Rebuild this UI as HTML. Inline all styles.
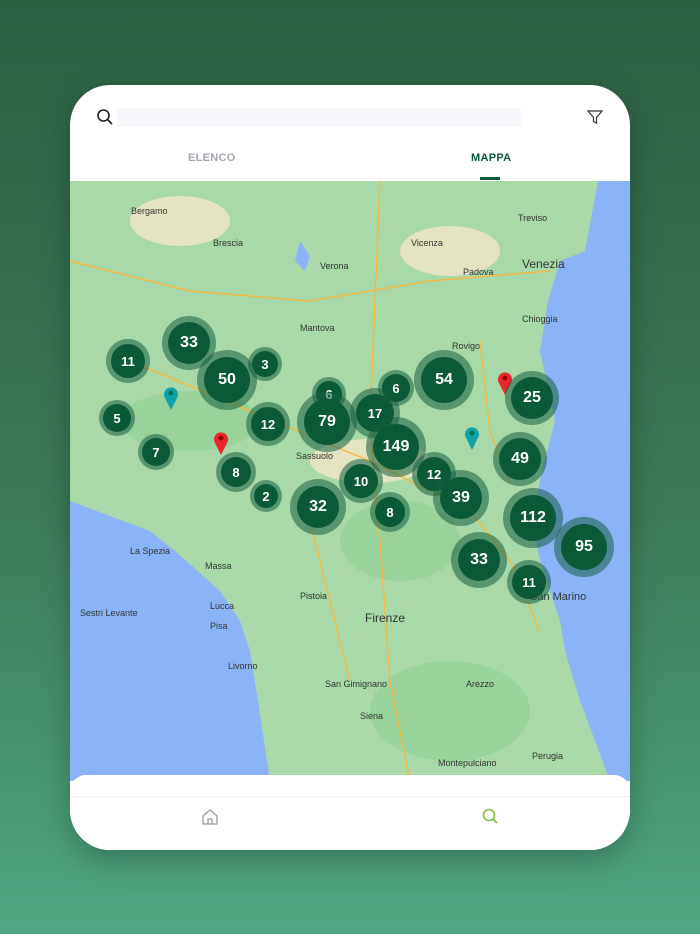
<!DOCTYPE html>
<html><head><meta charset="utf-8"><style>
*{margin:0;padding:0;box-sizing:border-box}
body{width:700px;height:934px;background:linear-gradient(#2d5f43 0%,#3a7a58 55%,#4fa883 100%);font-family:"Liberation Sans",sans-serif;position:relative;overflow:hidden}
.card{position:absolute;left:70px;top:85px;width:560px;height:765px;background:#fff;border-radius:40px;overflow:hidden;box-shadow:0 10px 30px rgba(0,0,0,.25)}
.search{position:absolute;left:47px;top:23px;width:404px;height:19px;background:#f8f8fc}
.tab{position:absolute;top:67px;font-size:11px;font-weight:bold;letter-spacing:.3px}
.map{position:absolute;left:0;top:96px;width:560px;height:600px;background:#a9d9a9}
.c{position:absolute;border-radius:50%;background:rgba(20,95,65,.55);display:flex;align-items:center;justify-content:center}
.c b{border-radius:50%;background:#0a5a38;color:#fff;display:flex;align-items:center;justify-content:center;font-weight:bold}
.lbl{position:absolute;font-size:9px;color:#333}
.nav{position:absolute;left:0;top:690px;width:560px;height:75px;background:#fff;border-radius:16px 16px 0 0}
</style></head><body>
<div class="card">
<svg style="position:absolute;left:26px;top:23px" width="18" height="18" viewBox="0 0 18 18"><circle cx="7.5" cy="7.5" r="5.5" fill="none" stroke="#222" stroke-width="1.6"/><path d="M11.5 11.5L16 16" stroke="#222" stroke-width="1.6"/></svg>
<div class="search"></div>
<svg style="position:absolute;left:517px;top:24px" width="16" height="16" viewBox="0 0 16 16"><path d="M1 2h14L9.5 8.5V14l-3-1.5V8.5Z" fill="none" stroke="#333" stroke-width="1.2"/></svg>
<div class="tab" style="left:118px;color:#a3a3b3">ELENCO</div>
<div class="tab" style="left:401px;color:#0b5a3a">MAPPA</div>
<div style="position:absolute;left:410px;top:92px;width:20px;height:3px;background:#0b5a3a"></div>
<div class="map">
<svg width="560" height="600" style="position:absolute;left:0;top:0">
<path d="M0 320L40 335L80 350L105 370L150 410L170 440L180 470L188 520L200 600L0 600Z" fill="#8ab4f8"/>
<path d="M560 0L560 600L540 600L510 520L495 470L490 440L470 380L462 340L472 290L485 240L470 170L478 120L490 80L515 70L528 0Z" fill="#8ab4f8"/>
<path d="M230 60L240 75L235 90L225 80Z" fill="#8ab4f8"/>
<g fill="#94cf95" opacity=".7"><ellipse cx="380" cy="530" rx="80" ry="50"/><ellipse cx="120" cy="240" rx="70" ry="30"/><ellipse cx="330" cy="360" rx="60" ry="40"/></g>
<g fill="#f3e6c8" opacity=".8"><ellipse cx="110" cy="40" rx="50" ry="25"/><ellipse cx="380" cy="70" rx="50" ry="25"/><ellipse cx="300" cy="280" rx="60" ry="22"/></g>
<g stroke="#f5b942" stroke-width="1.5" fill="none"><path d="M0 80L120 110L240 120L360 100L480 90"/><path d="M60 180L180 230L300 280L400 330L440 380L470 450"/><path d="M310 0L305 120L300 240L310 360L320 500L340 600"/><path d="M410 160L420 250L440 300"/><path d="M240 340L260 420L280 500"/></g>
</svg>
<div class="lbl" style="left:61px;top:25px">Bergamo</div><div class="lbl" style="left:143px;top:57px">Brescia</div><div class="lbl" style="left:250px;top:80px">Verona</div><div class="lbl" style="left:341px;top:57px">Vicenza</div><div class="lbl" style="left:393px;top:86px">Padova</div><div class="lbl" style="left:452px;top:76px;font-size:12px">Venezia</div><div class="lbl" style="left:448px;top:32px">Treviso</div><div class="lbl" style="left:230px;top:142px">Mantova</div><div class="lbl" style="left:382px;top:160px">Rovigo</div><div class="lbl" style="left:226px;top:270px">Sassuolo</div><div class="lbl" style="left:60px;top:365px">La Spezia</div><div class="lbl" style="left:135px;top:380px">Massa</div><div class="lbl" style="left:140px;top:420px">Lucca</div><div class="lbl" style="left:230px;top:410px">Pistoia</div><div class="lbl" style="left:295px;top:430px;font-size:12px">Firenze</div><div class="lbl" style="left:140px;top:440px">Pisa</div><div class="lbl" style="left:158px;top:480px">Livorno</div><div class="lbl" style="left:255px;top:498px">San Gimignano</div><div class="lbl" style="left:396px;top:498px">Arezzo</div><div class="lbl" style="left:290px;top:530px">Siena</div><div class="lbl" style="left:368px;top:577px">Montepulciano</div><div class="lbl" style="left:462px;top:570px">Perugia</div><div class="lbl" style="left:460px;top:410px;font-size:11px">San Marino</div><div class="lbl" style="left:10px;top:427px">Sestri Levante</div><div class="lbl" style="left:452px;top:133px">Chioggia</div>
<svg style="position:absolute;left:93px;top:205px" width="16" height="24"><path d="M8 24L2 12A7 7 0 1 1 14 12Z" fill="#0fa3a8"/><circle cx="8" cy="7" r="2.5" fill="#075"/></svg>
<svg style="position:absolute;left:143px;top:250px" width="16" height="24"><path d="M8 24L2 12A7 7 0 1 1 14 12Z" fill="#e8272b"/><circle cx="8" cy="7" r="2.5" fill="#900"/></svg>
<svg style="position:absolute;left:427px;top:190px" width="16" height="24"><path d="M8 24L2 12A7 7 0 1 1 14 12Z" fill="#e8272b"/><circle cx="8" cy="7" r="2.5" fill="#900"/></svg>
<svg style="position:absolute;left:394px;top:245px" width="16" height="24"><path d="M8 24L2 12A7 7 0 1 1 14 12Z" fill="#0fa3a8"/><circle cx="8" cy="7" r="2.5" fill="#075"/></svg>
<div id="cl"></div>
</div>
<div class="nav">
<div style="position:absolute;left:0;top:21px;width:560px;height:1px;background:#eee"></div>
<svg style="position:absolute;left:131px;top:33px" width="18" height="18" viewBox="0 0 18 18"><path d="M2 8L9 2L16 8V16H2Z M7 16V11H11V16" fill="none" stroke="#999" stroke-width="1.3"/></svg>
<svg style="position:absolute;left:411px;top:32px" width="18" height="18" viewBox="0 0 18 18"><circle cx="8" cy="8" r="5.5" fill="none" stroke="#7cc142" stroke-width="1.6"/><path d="M12 12L16 16" stroke="#7cc142" stroke-width="1.6"/></svg>
</div>
</div>
<script>
var d=[[11,128,361,22],[33,189,343,27],[3,265,364,17],[50,227,380,30],[5,117,418,18],[7,156,452,18],[12,268,424,22],[6,329,394,17],[79,327,422,30],[17,375,413,25],[6,396,388,18],[54,444,380,30],[149,396,447,30],[25,532,398,27],[8,236,472,20],[2,266,496,16],[10,361,481,22],[12,434,474,22],[39,461,498,28],[49,520,459,27],[32,318,507,28],[8,390,512,20],[112,533,518,30],[33,479,560,28],[95,584,547,30],[11,529,582,22]];
var h='';d.forEach(function(a){var r=a[3],x=a[1]-70-r,y=a[2]-181-r,ir=Math.round(r*0.76);h+='<div class="c" style="left:'+x+'px;top:'+y+'px;width:'+2*r+'px;height:'+2*r+'px"><b style="width:'+2*ir+'px;height:'+2*ir+'px;font-size:'+(r>25?16:13)+'px">'+a[0]+'</b></div>';});
document.getElementById('cl').innerHTML=h;
</script>
</body></html>
